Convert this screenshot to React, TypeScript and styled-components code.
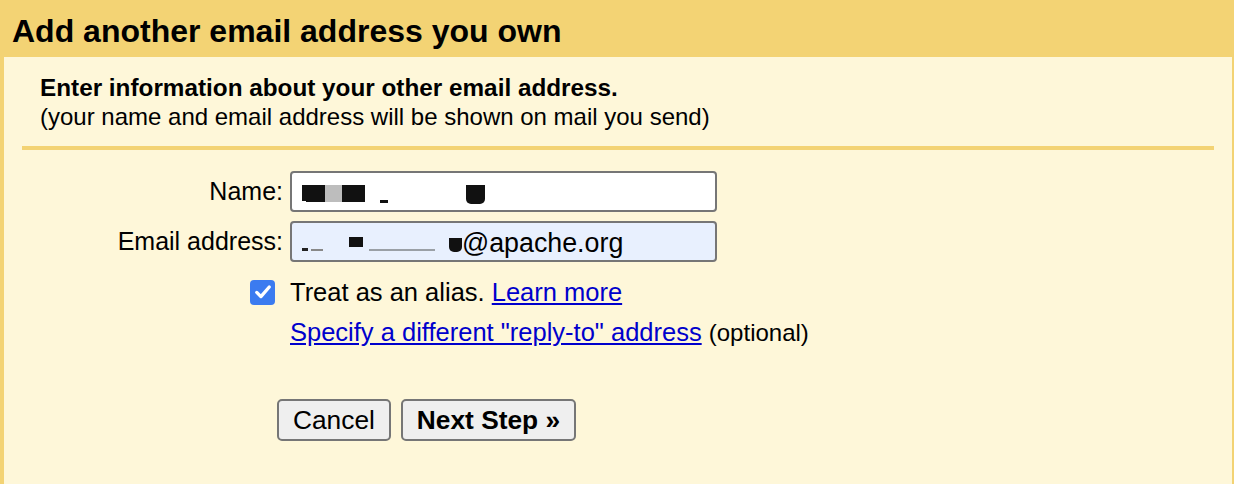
import React from "react";
import styled, { createGlobalStyle } from "styled-components";

const GlobalStyle = createGlobalStyle`
  html, body {
    margin: 0;
    padding: 0;
    background: #fef7d9;
  }
  body {
    font-family: "Liberation Sans", Arial, sans-serif;
    color: #000;
  }
`;

const Page = styled.div`
  width: 1234px;
  height: 484px;
  display: flex;
  flex-direction: column;
  overflow: hidden;
`;

const Header = styled.div`
  height: 57px;
  flex: 0 0 57px;
  background: #f3d374;
  display: flex;
  align-items: center;
  padding-left: 12px;
  box-sizing: border-box;
`;

const Title = styled.h1`
  margin: 0;
  font-size: 32px;
  font-weight: bold;
  padding-top: 5px;
`;

const Body = styled.div`
  flex: 1;
  background: #fef7d9;
  border-left: 4px solid #f3d374;
  border-right: 2px solid #f3d374;
`;

const Intro = styled.div`
  padding: 16px 0 0 36px;
  height: 73px;
`;

const Lead = styled.div`
  font-size: 24.3px;
  font-weight: bold;
  line-height: 29px;
`;

const Sub = styled.div`
  font-size: 24px;
  line-height: 29px;
`;

const Divider = styled.div`
  height: 4px;
  background: #f3d374;
  margin: 0 18px;
`;

const Form = styled.div`
  display: grid;
  grid-template-columns: 279px 427px;
  column-gap: 7px;
  row-gap: 9px;
  align-items: center;
  padding-top: 21px;
`;

const Label = styled.label`
  font-size: 25px;
  text-align: right;
`;

const Field = styled.div<{ $autofill?: boolean }>`
  height: 41px;
  box-sizing: border-box;
  border: 2px solid #767676;
  border-radius: 4px;
  background: ${(p) => (p.$autofill ? "#e8f0fe" : "#ffffff")};
  display: flex;
  align-items: flex-start;
  padding-left: 8px;
  font-size: 26.8px;
  overflow: hidden;
`;

const Mark = styled.span<{ $w: number; $h: number; $top: number; $gap?: number; $shade?: string; $round?: boolean }>`
  display: block;
  flex: 0 0 auto;
  width: ${(p) => p.$w}px;
  height: ${(p) => p.$h}px;
  margin-top: ${(p) => p.$top}px;
  margin-left: ${(p) => p.$gap ?? 0}px;
  background: ${(p) => p.$shade ?? "#111"};
  border-radius: ${(p) => (p.$round ? "0 0 5px 5px" : "0")};
`;

const FieldText = styled.span`
  margin-top: 5px;
  line-height: 30px;
`;

const CheckCell = styled.div`
  display: flex;
  justify-content: flex-end;
  padding-right: 8px;
  margin-top: 6px;
`;

const Checkbox = styled.span`
  width: 25px;
  height: 25px;
  border-radius: 4px;
  background: #3b7bf0;
  display: flex;
  align-items: center;
  justify-content: center;
`;

const Option = styled.div<{ $tight?: boolean }>`
  font-size: 25.5px;
  line-height: 30px;
  margin-top: ${(p) => (p.$tight ? 1 : 6)}px;
  white-space: nowrap;
`;

const Link = styled.a`
  color: #0000cc;
  text-decoration: underline;
  cursor: pointer;
`;

const Muted = styled.span`
  font-size: 24px;
`;

const Actions = styled.div`
  display: flex;
  gap: 10px;
  padding: 51px 0 0 273px;
`;

const Button = styled.button<{ $primary?: boolean }>`
  height: 42px;
  box-sizing: border-box;
  padding: 0 14px;
  border: 2px solid #767676;
  border-radius: 5px;
  background: #efefef;
  font-family: "Liberation Sans", Arial, sans-serif;
  font-size: 26.3px;
  font-weight: ${(p) => (p.$primary ? "bold" : "normal")};
  color: #000;
`;

export default function App() {
  return (
    <>
      <GlobalStyle />
      <Page>
        <Header>
          <Title>Add another email address you own</Title>
        </Header>
        <Body>
          <Intro>
            <Lead>Enter information about your other email address.</Lead>
            <Sub>(your name and email address will be shown on mail you send)</Sub>
          </Intro>
          <Divider />
          <Form>
            <Label>Name:</Label>
            <Field>
              <Mark $w={4} $h={16} $top={12} $gap={2} />
              <Mark $w={19} $h={17} $top={12} />
              <Mark $w={17} $h={17} $top={12} $shade="#bdbdbd" />
              <Mark $w={23} $h={17} $top={12} />
              <Mark $w={8} $h={3} $top={27} $gap={15} />
              <Mark $w={19} $h={19} $top={12} $gap={78} $round />
            </Field>

            <Label>Email address:</Label>
            <Field $autofill>
              <Mark $w={6} $h={3} $top={25} $gap={2} $shade="#222" />
              <Mark $w={12} $h={2} $top={26} $gap={3} $shade="#888" />
              <Mark $w={14} $h={10} $top={14} $gap={26} />
              <Mark $w={66} $h={2} $top={26} $gap={6} $shade="#9aa0a6" />
              <Mark $w={13} $h={14} $top={15} $gap={14} $round />
              <FieldText>@apache.org</FieldText>
            </Field>

            <CheckCell>
              <Checkbox>
                <svg width="20" height="20" viewBox="0 0 24 24" fill="none">
                  <path d="M4.5 12.5l5 5L19.5 6" stroke="#fff" strokeWidth="4" strokeLinecap="round" strokeLinejoin="round" />
                </svg>
              </Checkbox>
            </CheckCell>
            <Option>
              Treat as an alias. <Link>Learn more</Link>
            </Option>

            <span />
            <Option $tight>
              <Link>Specify a different "reply-to" address</Link> <Muted>(optional)</Muted>
            </Option>
          </Form>
          <Actions>
            <Button>Cancel</Button>
            <Button $primary>Next Step »</Button>
          </Actions>
        </Body>
      </Page>
    </>
  );
}
